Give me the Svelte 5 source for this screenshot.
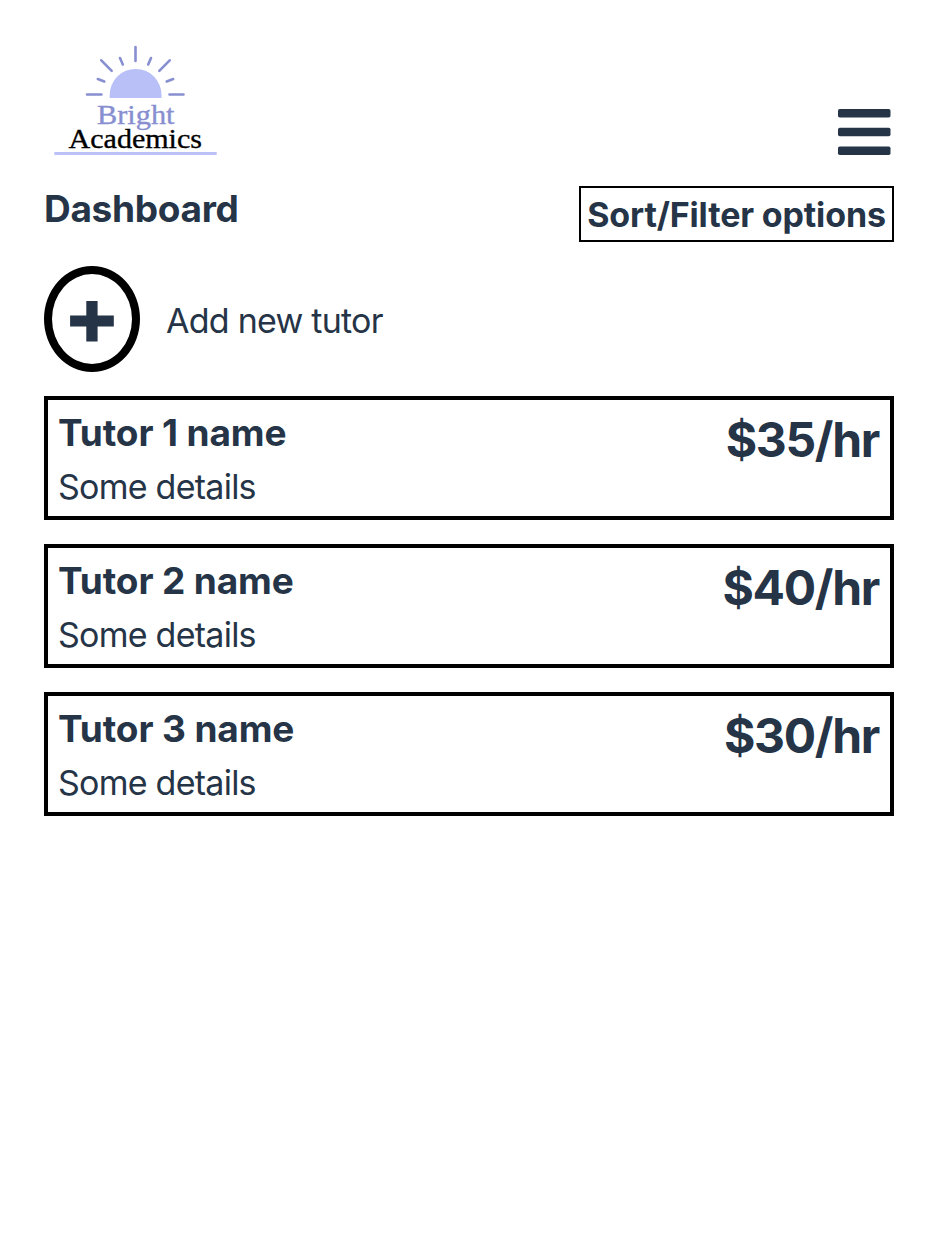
<script>
  const tutors = [
    { name: 'Tutor 1 name', rate: '$35/hr' },
    { name: 'Tutor 2 name', rate: '$40/hr' },
    { name: 'Tutor 3 name', rate: '$30/hr' }
  ];
</script>

<main>
  <header>
    <svg class="logo" width="184" height="130" viewBox="40 35 184 130" role="img" aria-label="Bright Academics">
      <path d="M109.700 98v-3.200a25.900 25.900 0 0 1 51.800 0v3.200z" fill="#b9bff7" />
      <path d="M135.500 47v14M120 58l2.800 6.500M151 58l-2.800 6.500M101.300 60.300l10.400 10.600M169.700 60.300l-10.400 10.600M97.800 79l6.500 2.500M173.200 79l-6.500 2.500M87 94.500h14.500M169.500 94.500h14" fill="none" stroke="#888fd1" stroke-width="2.600" stroke-linecap="round" />
      <text x="97" y="123.700" textLength="77.500" lengthAdjust="spacingAndGlyphs" fill="#888fd1" stroke="#888fd1">Bright</text>
      <text x="68.500" y="147.500" textLength="133.500" lengthAdjust="spacingAndGlyphs" fill="#000" stroke="#000">Academics</text>
      <path d="M54.300 153.600h162.400" stroke="#bcc2f9" stroke-width="3" />
    </svg>
    <button class="menu" aria-label="Menu">
      <svg width="53" height="47" viewBox="0 0 53 47" fill="#253446">
        <rect x="0" y="0" width="52.500" height="8.600" rx="1.800" />
        <rect x="0" y="18.700" width="52.500" height="8.600" rx="1.800" />
        <rect x="0" y="37.400" width="52.500" height="8.600" rx="1.800" />
      </svg>
    </button>
  </header>
  <div class="heading">
    <h1>Dashboard</h1>
    <button class="sort">Sort/Filter options</button>
  </div>
  <button class="add">
    <span class="ring"><svg width="44" height="42" viewBox="0 0 44 42"><path d="M16.300 1h11.300v14.600h16.200v10.800h-16.200v15h-11.300v-15h-16.200v-10.800h16.200z" fill="#253446" /></svg></span>
    <span class="label">Add new tutor</span>
  </button>
  <div class="list">
    {#each tutors as t}
      <article>
        <div><h2>{t.name}</h2><p>Some details</p></div>
        <strong>{t.rate}</strong>
      </article>
    {/each}
  </div>
</main>

<style>
  :global(body) { background: #fff; }
  main { box-sizing: border-box; width: 938px; height: 1238px; padding: 35px 44px 0; font-family: Inter, sans-serif; color: #253446; }
  button { font: inherit; color: inherit; background: none; border: 0; padding: 0; }
  header { display: flex; justify-content: space-between; height: 151px; }
  .logo { margin-left: -4px; }
  .logo text { font: 27px "Liberation Serif", serif; stroke-width: 0.35px; }
  .menu { width: 53px; height: 47px; margin: 74px 3.500px 0 0; }
  .menu svg { display: block; }
  .heading { display: flex; justify-content: space-between; height: 56px; }
  h1, h2, p { margin: 0; }
  h1, h2 { font-size: 37px; line-height: 46px; font-weight: 700; letter-spacing: -0.3px; }
  h2 { letter-spacing: -0.12px; }
  .sort { box-sizing: border-box; width: 315px; height: 56px; border: 2px solid #000; font-size: 34px; font-weight: 700; letter-spacing: -0.15px; white-space: nowrap; }
  .add { display: flex; align-items: center; gap: 26px; margin-top: 24px; }
  .ring { box-sizing: border-box; width: 96px; height: 106px; border: 8px solid #000; border-radius: 50%; display: flex; align-items: center; justify-content: center; padding-top: 3px; }
  .label, p { font-size: 34px; letter-spacing: -0.75px; }
  .label { padding-top: 2px; }
  .list { display: grid; gap: 24px; margin-top: 24px; }
  article { box-sizing: border-box; height: 124px; border: 4px solid #000; padding: 10px 10px 0; display: flex; justify-content: space-between; }
  p { line-height: 46px; margin-top: 8px; }
  strong { font-size: 48px; line-height: 60px; font-weight: 700; letter-spacing: -1.3px; margin-right: 1px; }
</style>
